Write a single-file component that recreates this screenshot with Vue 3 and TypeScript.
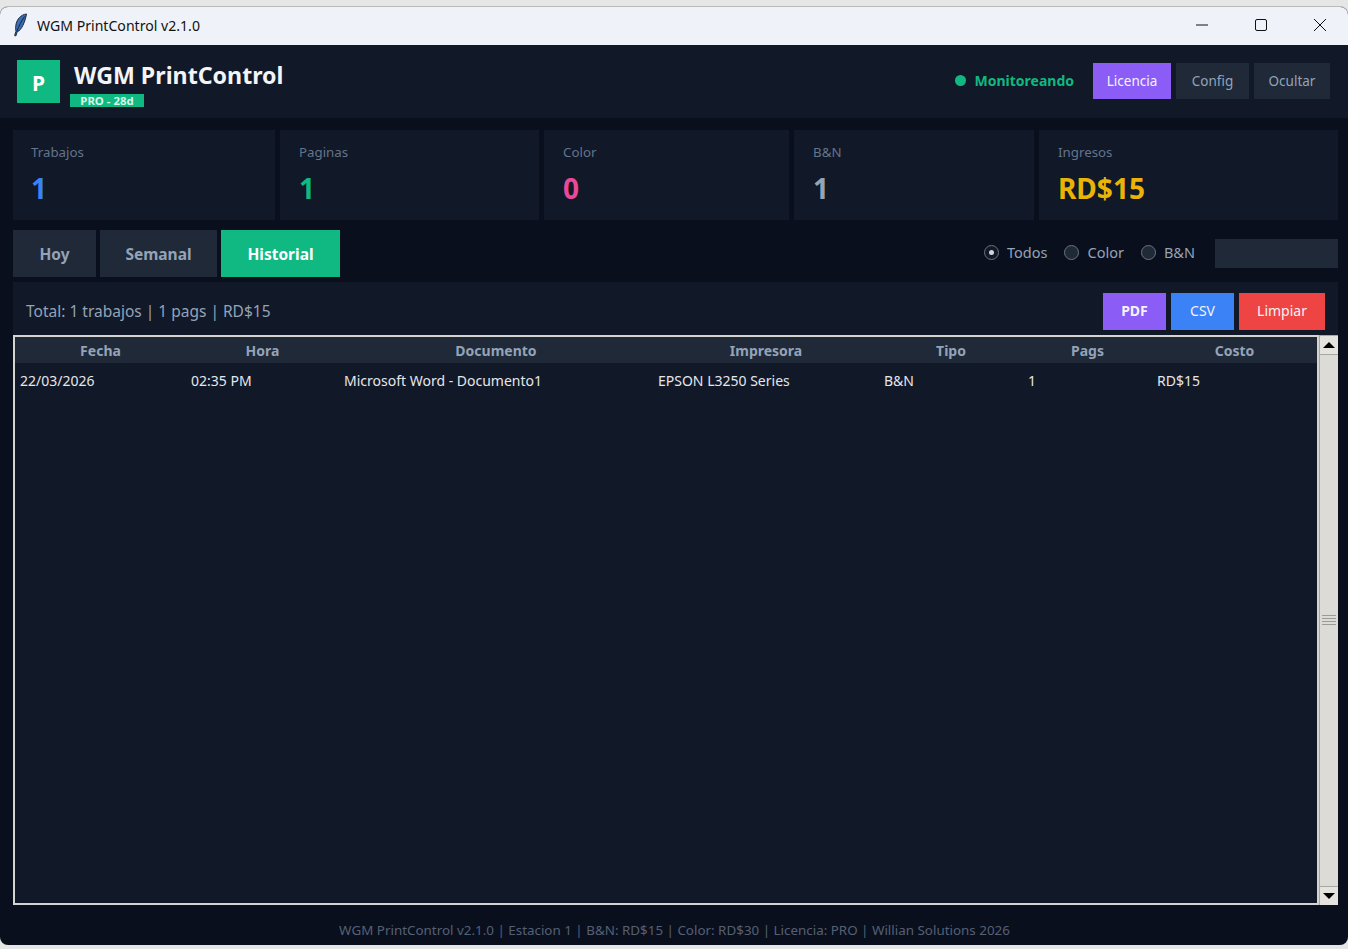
<script setup lang="ts">
import { ref } from 'vue'

interface Stat {
  label: string
  value: string
  tone: string
}

const stats: Stat[] = [
  { label: 'Trabajos', value: '1', tone: 'blue' },
  { label: 'Paginas', value: '1', tone: 'green' },
  { label: 'Color', value: '0', tone: 'pink' },
  { label: 'B&N', value: '1', tone: 'gray' },
  { label: 'Ingresos', value: 'RD$15', tone: 'gold' },
]

const tabs = ['Hoy', 'Semanal', 'Historial']
const activeTab = ref('Historial')

const filters = ['Todos', 'Color', 'B&N']
const filter = ref('Todos')

const columns = ['Fecha', 'Hora', 'Documento', 'Impresora', 'Tipo', 'Pags', 'Costo']
const rows = [
  ['22/03/2026', '02:35 PM', 'Microsoft Word - Documento1', 'EPSON L3250 Series', 'B&N', '1', 'RD$15'],
]
</script>

<template>
  <div class="window">
    <div class="titlebar">
      <svg class="feather" viewBox="0 0 16 24" width="16" height="24">
        <path d="M14.5 1 C9 1.5 4.5 6.5 3.8 12.5 C3.5 15 3.7 17 4 18.2 L2.6 22.5 L3.8 23 L5.2 18.8 C9.5 17.5 13 9 14.5 1 Z" fill="#3a6db5" stroke="#1d2a3d" stroke-width="1" />
        <path d="M12.5 3.5 C9.5 8 6.8 13 4.8 18.5" stroke="#12233f" stroke-width="1" fill="none" />
      </svg>
      <span class="title-text">WGM PrintControl v2.1.0</span>
      <div class="win-controls">
        <svg viewBox="0 0 12 12" width="12" height="12"><path d="M0 6h12" stroke="#111" fill="none" /></svg>
        <svg viewBox="0 0 12 12" width="12" height="12"><rect x="0.5" y="0.5" width="11" height="11" rx="1.5" stroke="#111" fill="none" /></svg>
        <svg viewBox="0 0 12 12" width="12" height="12"><path d="M0 0l12 12M12 0L0 12" stroke="#111" fill="none" /></svg>
      </div>
    </div>

    <header class="header">
      <div class="logo">P</div>
      <div class="brand">
        <h1>WGM PrintControl</h1>
        <span class="plan">PRO - 28d</span>
      </div>
      <div class="header-right">
        <span class="dot"></span>
        <span class="monitor">Monitoreando</span>
        <button class="hbtn hbtn-purple">Licencia</button>
        <button class="hbtn hbtn-config">Config</button>
        <button class="hbtn hbtn-hide">Ocultar</button>
      </div>
    </header>

    <main class="content">
      <section class="stats">
        <div v-for="s in stats" :key="s.label" class="stat">
          <div class="stat-label">{{ s.label }}</div>
          <div class="stat-value" :class="s.tone">{{ s.value }}</div>
        </div>
      </section>

      <section class="toolbar">
        <div class="tabs">
          <button
            v-for="t in tabs"
            :key="t"
            class="tab"
            :class="{ active: activeTab === t }"
            @click="activeTab = t"
          >
            {{ t }}
          </button>
        </div>
        <div class="filters">
          <label v-for="f in filters" :key="f" class="radio" @click="filter = f">
            <span class="radio-mark" :class="{ on: filter === f }"></span>
            {{ f }}
          </label>
          <input class="search" type="text" />
        </div>
      </section>

      <section class="panel">
        <div class="panel-top">
          <span class="total">Total: 1 trabajos | 1 pags | RD$15</span>
          <div class="actions">
            <button class="act act-pdf">PDF</button>
            <button class="act act-csv">CSV</button>
            <button class="act act-clear">Limpiar</button>
          </div>
        </div>
        <div class="table-wrap">
          <div class="table">
            <div class="row head">
              <div v-for="c in columns" :key="c" class="cell">{{ c }}</div>
            </div>
            <div v-for="(r, i) in rows" :key="i" class="row body-row">
              <div v-for="(v, j) in r" :key="j" class="cell">{{ v }}</div>
            </div>
          </div>
          <div class="scrollbar">
            <div class="arrow"><span class="tri-up"></span></div>
            <div class="thumb"><span class="grip"></span></div>
            <div class="arrow"><span class="tri-down"></span></div>
          </div>
        </div>
      </section>
    </main>

    <footer class="footer">
      WGM PrintControl v2.1.0 | Estacion 1 | B&amp;N: RD$15 | Color: RD$30 | Licencia: PRO | Willian Solutions 2026
    </footer>
  </div>
</template>

<style scoped>
.window {
  height: 938px;
  margin-top: 7px;
  display: flex;
  flex-direction: column;
  background: #0a0f1e;
  border-radius: 8px;
  overflow: hidden;
  font-family: "Noto Sans", "Open Sans", sans-serif;
  box-shadow: 0 -1px 0 #b9b9b9;
}

.titlebar {
  height: 38px;
  flex: none;
  display: flex;
  align-items: center;
  padding-left: 12px;
  padding-bottom: 2px;
  box-sizing: border-box;
  background: #eff3f9;
  color: #111;
  font-size: 14.1px;
}

.feather {
  margin-right: 9px;
}

.win-controls {
  margin-left: auto;
  display: flex;
  gap: 47px;
  padding-right: 22px;
}

.header {
  height: 73px;
  flex: none;
  display: flex;
  align-items: center;
  padding: 0 18px 0 17px;
  background: #111827;
}

.logo {
  width: 43px;
  height: 43px;
  display: flex;
  align-items: center;
  justify-content: center;
  padding-top: 2px;
  box-sizing: border-box;
  background: #10b981;
  color: #fff;
  font-size: 21px;
  font-weight: 700;
}

.brand {
  margin-left: 10px;
  display: flex;
  flex-direction: column;
  align-items: flex-start;
  padding-top: 3px;
}

.brand h1 {
  margin: 0 0 4px 4px;
  font-size: 23.2px;
  line-height: 30px;
  font-weight: 700;
  color: #f3f4f6;
}

.plan {
  height: 13px;
  width: 74px;
  background: #10b981;
  color: #d6f5e8;
  font-size: 11.4px;
  font-weight: 700;
  line-height: 14px;
  text-align: center;
}

.header-right {
  margin-left: auto;
  margin-bottom: 2px;
  display: flex;
  align-items: center;
}

.dot {
  width: 11px;
  height: 11px;
  border-radius: 50%;
  background: #10b981;
  margin-right: 9px;
}

.monitor {
  color: #10b981;
  font-size: 14px;
  font-weight: 700;
  margin-right: 19px;
}

.hbtn {
  height: 36px;
  border: 0;
  padding: 0;
  font-family: inherit;
  font-size: 13.5px;
  background: #1f2937;
  color: #94a3b8;
}

.hbtn-purple {
  width: 78px;
  margin-right: 5px;
  background: #8b5cf6;
  color: #f3f4f6;
}

.hbtn-config {
  width: 73px;
  margin-right: 5px;
}

.hbtn-hide {
  width: 76px;
}

.content {
  flex: 1;
  min-height: 0;
  display: flex;
  flex-direction: column;
  padding: 12px 10px 0 13px;
}

.stats {
  display: grid;
  grid-template-columns: 262px 259px 245px 240px 1fr;
  gap: 5px;
}

.stat {
  height: 90px;
  padding: 13px 18px 13px 19px;
  box-sizing: border-box;
  background: #111827;
}

.stat:first-child {
  padding-left: 18px;
}

.stat-label {
  color: #64748b;
  font-size: 13.3px;
  line-height: 18px;
}

.stat-value {
  margin-top: 9px;
  font-size: 28px;
  line-height: 36px;
  font-weight: 700;
}

.blue { color: #3b82f6; }
.green { color: #10b981; }
.pink { color: #ec4899; }
.gray { color: #94a3b8; }
.gold { color: #eab308; }

.toolbar {
  margin-top: 10px;
  display: flex;
  align-items: flex-start;
  justify-content: space-between;
}

.tabs {
  display: grid;
  grid-template-columns: 83px 117px 119px;
  gap: 4px;
}

.tab {
  height: 47px;
  border: 0;
  padding: 0;
  background: #1f2937;
  color: #94a3b8;
  font-family: inherit;
  font-size: 15.5px;
  font-weight: 700;
}

.tab.active {
  background: #10b981;
  color: #fff;
}

.filters {
  display: flex;
  align-items: center;
  height: 46px;
}

.radio {
  display: flex;
  align-items: center;
  gap: 8px;
  margin-right: 17px;
  margin-bottom: 2px;
  color: #94a3b8;
  font-size: 14.5px;
}

.radio:nth-of-type(3) {
  margin-right: 20px;
}

.radio-mark {
  width: 15px;
  height: 15px;
  box-sizing: border-box;
  border-radius: 50%;
  border: 1px solid #6b7280;
  background: #1f2937;
  display: flex;
  align-items: center;
  justify-content: center;
}

.radio-mark.on {
  background: #111827;
}

.radio-mark.on::after {
  content: '';
  width: 5px;
  height: 5px;
  border-radius: 50%;
  background: #d1d5db;
}

.search {
  width: 123px;
  height: 29px;
  box-sizing: border-box;
  border: 0;
  background: #1f2937;
}

.panel {
  margin-top: 5px;
  flex: 1;
  min-height: 0;
  display: flex;
  flex-direction: column;
  background: #111827;
}

.panel-top {
  height: 53px;
  flex: none;
  display: flex;
  align-items: center;
  justify-content: space-between;
  padding: 5px 13px 0;
  box-sizing: border-box;
}

.total {
  color: #94a3b8;
  font-size: 15.5px;
  margin-top: -1px;
}

.actions {
  display: flex;
  gap: 5px;
}

.act {
  height: 37px;
  border: 0;
  padding: 0 0 2px;
  color: #f3f4f6;
  font-family: inherit;
  font-size: 14px;
}

.act-pdf { width: 63px; background: #8b5cf6; font-weight: 700; }
.act-csv { width: 63px; background: #3b82f6; }
.act-clear { width: 86px; background: #ef4444; }

.table-wrap {
  height: 570px;
  flex: none;
  display: flex;
}

.table {
  width: 1306px;
  flex: none;
  box-sizing: border-box;
  border: 2px solid #d4d4d0;
}

.row {
  display: grid;
  grid-template-columns: 171px 153px 314px 226px 144px 129px 1fr;
}

.head {
  height: 26px;
  background: #1f2937;
  color: #94a3b8;
  font-size: 14px;
  font-weight: 700;
  line-height: 27px;
  text-align: center;
}

.body-row {
  height: 36px;
  color: #e5e7eb;
  font-size: 14px;
  line-height: 36px;
}

.body-row .cell {
  padding-left: 5px;
}

.scrollbar {
  width: 19px;
  flex: none;
  display: flex;
  flex-direction: column;
  background: #a8a8a2;
  padding: 1px 0 0 1px;
  box-sizing: border-box;
}

.arrow {
  height: 18px;
  flex: none;
  display: flex;
  align-items: center;
  justify-content: center;
  background: #e4e3de;
  border-bottom: 1px solid #a8a8a2;
}

.arrow:last-child {
  border-bottom: 0;
  border-top: 1px solid #a8a8a2;
}

.tri-up,
.tri-down {
  width: 0;
  height: 0;
  border-left: 6px solid transparent;
  border-right: 6px solid transparent;
}

.tri-up { border-bottom: 6px solid #000; }
.tri-down { border-top: 6px solid #000; }

.thumb {
  flex: 1;
  display: flex;
  align-items: center;
  justify-content: center;
  background: #dcdbd6;
}

.grip {
  width: 14px;
  height: 11px;
  background: repeating-linear-gradient(#9b9b96 0 1px, #dcdbd6 1px 3px);
}

.footer {
  height: 40px;
  flex: none;
  display: flex;
  align-items: center;
  justify-content: center;
  box-sizing: border-box;
  padding: 10px 0 0 1px;
  color: #556074;
  font-size: 13.4px;
}
</style>

<style>
html, body {
  margin: 0;
  background: #e6e6e6;
}
</style>
